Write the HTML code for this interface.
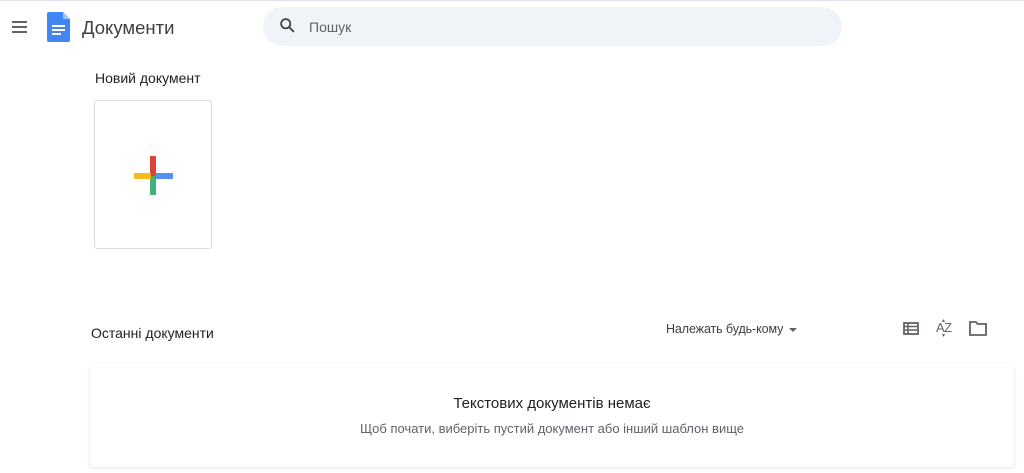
<!DOCTYPE html>
<html><head><meta charset="utf-8"><style>
*{margin:0;padding:0;box-sizing:border-box}
body{width:1024px;height:473px;overflow:hidden;background:#fff;font-family:"Liberation Sans","Noto Sans CJK SC",sans-serif;position:relative;color:#202124}
.topline{position:absolute;left:0;top:0;width:1024px;height:1px;background:#e4e2f0}
.abs{position:absolute}
</style></head><body>
<div class="topline"></div>
<div class="abs" style="left:12px;top:21px;width:15px;height:2px;background:#5f6368"></div>
<div class="abs" style="left:12px;top:26px;width:15px;height:2px;background:#5f6368"></div>
<div class="abs" style="left:12px;top:31px;width:15px;height:2px;background:#5f6368"></div>
<svg class="abs" style="left:47px;top:12px" width="24" height="30" viewBox="0 0 24 30">
<path d="M2 0H16L23 7V28a2 2 0 0 1-2 2H2a2 2 0 0 1-2-2V2a2 2 0 0 1 2-2z" fill="#4285f4"/>
<path d="M16 0L23 7H17a1 1 0 0 1-1-1z" fill="#a1c2fa"/>
<rect x="5" y="13" width="13" height="2" fill="#fff"/><rect x="5" y="17" width="13" height="2" fill="#fff"/><rect x="5" y="21" width="9" height="2" fill="#fff"/>
</svg>
<div class="abs" style="left:82px;top:17px;font-size:18.5px;color:#3c4043">Документи</div>
<div class="abs" style="left:263px;top:7px;width:579px;height:39px;border-radius:20px;background:#f0f3f8"></div>
<svg class="abs" style="left:279px;top:17px" width="17" height="17" viewBox="0 0 24 24"><circle cx="9.5" cy="9.5" r="6.5" fill="none" stroke="#3c4043" stroke-width="2.4"/><path d="M14.5 14.5L21 21" stroke="#3c4043" stroke-width="2.6"/></svg>
<div class="abs" style="left:309px;top:19px;font-size:14px;color:#5f6368">Пошук</div>
<div class="abs" style="left:95px;top:70px;font-size:14px;color:#202124">Новий документ</div>
<div class="abs" style="left:94px;top:100px;width:118px;height:149px;border:1px solid #dadce0;border-radius:3px"></div>
<div class="abs" style="left:150px;top:156px;width:6px;height:20px;background:#db4437"></div>
<div class="abs" style="left:150px;top:175px;width:6px;height:20px;background:#0f9d58;opacity:.8"></div>
<div class="abs" style="left:134px;top:173px;width:17px;height:6px;background:#f4b400;opacity:.9"></div>
<div class="abs" style="left:155px;top:173px;width:18px;height:6px;background:#4285f4;opacity:.9"></div>
<div class="abs" style="left:91px;top:325px;font-size:14px;color:#202124">Останні документи</div>
<div class="abs" style="left:666px;top:322px;font-size:12.5px;color:#3c4043;letter-spacing:-0.1px">Належать будь-кому</div>
<div class="abs" style="left:789px;top:328px;width:0;height:0;border-left:4px solid transparent;border-right:4px solid transparent;border-top:4px solid #5f6368"></div>
<svg class="abs" style="left:903px;top:322px" width="16" height="13" viewBox="0 0 16 13"><rect x="1" y="1" width="14" height="11" fill="none" stroke="#5f6368" stroke-width="1.8"/><path d="M1 4.5H15M1 8H15M5 1V12" stroke="#5f6368" stroke-width="1.6"/></svg>
<div class="abs" style="left:936px;top:320px;font-size:13px;color:#5f6368;letter-spacing:-0.5px">AZ</div>
<div class="abs" style="left:942px;top:317px;font-size:6px;color:#5f6368">▴</div>
<div class="abs" style="left:942px;top:332px;font-size:6px;color:#5f6368">▾</div>
<svg class="abs" style="left:969px;top:321px" width="18" height="15" viewBox="0 0 18 15"><path d="M1 1H7L8.5 3H17V14H1z" fill="none" stroke="#5f6368" stroke-width="1.8"/></svg>
<div class="abs" style="left:90px;top:364px;width:924px;height:103px;border-radius:3px;box-shadow:0 1px 3px rgba(60,64,67,.15)"></div>
<div class="abs" style="left:90px;top:395px;width:924px;text-align:center;font-size:15px;color:#202124">Текстових документів немає</div>
<div class="abs" style="left:90px;top:421px;width:924px;text-align:center;font-size:13px;color:#5f6368">Щоб почати, виберіть пустий документ або інший шаблон вище</div>
</body></html>
